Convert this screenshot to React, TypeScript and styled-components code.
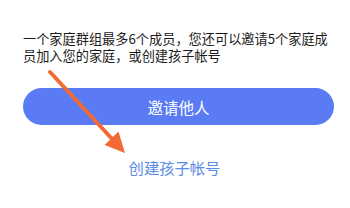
import { createGlobalStyle, styled } from 'styled-components';

const GlobalStyle = createGlobalStyle`
  html, body {
    margin: 0;
    padding: 0;
    background: #ffffff;
  }

  body {
    font-family: "Noto Sans CJK SC", "Noto Sans", sans-serif;
  }
`;

const Page = styled.main`
  position: relative;
  width: 350px;
  height: 208px;
  overflow: hidden;
  box-sizing: border-box;
  padding: 30px 16px 0 23px;
  display: flex;
  flex-direction: column;
`;

const Description = styled.p`
  margin: 0;
  font-size: 13.2px;
  line-height: 17px;
  color: #1a1a1a;
  white-space: nowrap;
`;

const InviteButton = styled.button`
  margin-top: 24px;
  height: 37px;
  width: 100%;
  border: none;
  border-radius: 19px;
  background: #5a7bf4;
  color: #ffffff;
  font-family: inherit;
  font-size: 15.5px;
  display: flex;
  align-items: center;
  justify-content: center;
`;

const ChildLink = styled.a`
  margin-top: 31px;
  align-self: center;
  margin-right: 8px;
  font-size: 15.3px;
  line-height: 22px;
  color: #5b8ce6;
  text-decoration: none;
`;

const ArrowLayer = styled.svg`
  position: absolute;
  inset: 0;
  pointer-events: none;
`;

function Arrow() {
  return (
    <ArrowLayer width="350" height="208" viewBox="0 0 350 208">
      <line x1="50" y1="72" x2="114" y2="141" stroke="#f26b35" strokeWidth="4" strokeLinecap="round" />
      <polygon points="125,153 104.5,145 118.5,131.5" fill="#f26b35" />
    </ArrowLayer>
  );
}

function App() {
  return (
    <>
      <GlobalStyle />
      <Page>
        <Description>
          一个家庭群组最多6个成员，您还可以邀请5个家庭成
          <br />
          员加入您的家庭，或创建孩子帐号
        </Description>
        <InviteButton>邀请他人</InviteButton>
        <ChildLink href="#">创建孩子帐号</ChildLink>
        <Arrow />
      </Page>
    </>
  );
}

export default App;
